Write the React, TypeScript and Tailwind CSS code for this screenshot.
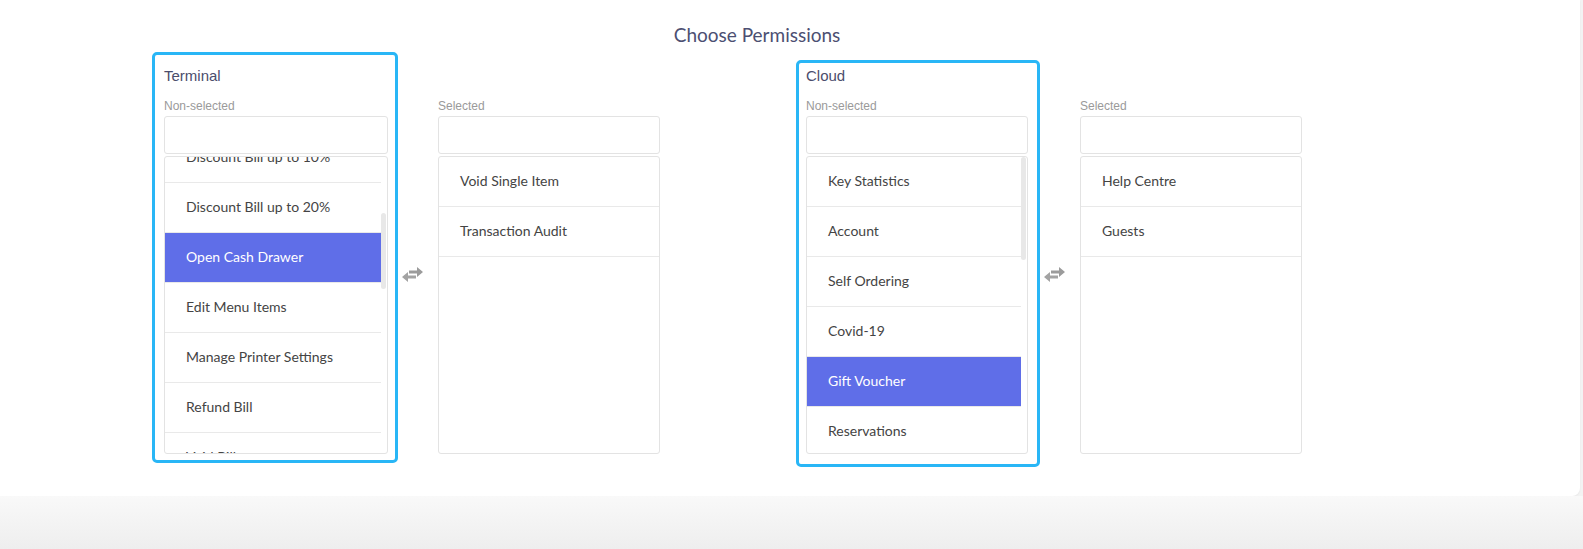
import React from "react";

type Row = { label: string; active?: boolean };

const terminalOptions: Row[] = [
  { label: "Discount Bill up to 10%" },
  { label: "Discount Bill up to 20%" },
  { label: "Open Cash Drawer", active: true },
  { label: "Edit Menu Items" },
  { label: "Manage Printer Settings" },
  { label: "Refund Bill" },
  { label: "Void Bill" },
];

const cloudOptions: Row[] = [
  { label: "Key Statistics" },
  { label: "Account" },
  { label: "Self Ordering" },
  { label: "Covid-19" },
  { label: "Gift Voucher", active: true },
  { label: "Reservations" },
];

function ListRow({ row }: { row: Row }) {
  return (
    <div
      className={
        row.active
          ? "h-[50px] shrink-0 flex items-center pl-[21px] pb-[3px] border-b border-[#e9e9e9] bg-[#5f6ee8] text-white font-['Lato',sans-serif] text-[14px]"
          : "h-[50px] shrink-0 flex items-center pl-[21px] pb-[3px] border-b border-[#e9e9e9] text-[#444444] font-['Lato',sans-serif] text-[14px]"
      }
    >
      {row.label}
    </div>
  );
}

function FilterBox() {
  return <div className="mt-[3px] h-[38px] rounded-[3px] border border-[#e3e3e3] bg-white" />;
}

function SwapIcon() {
  return (
    <svg width="21" height="15" viewBox="0 0 21 15" className="mt-[215px] ml-[4px] mr-[15px] shrink-0">
      <path d="M7 3.5H15V0L21 5L15 10V6.5H7Z" fill="#9b9b9b" />
      <path d="M14 8.5H6V5L0 10L6 15V11.5H14Z" fill="#a3a3a3" />
    </svg>
  );
}

function NonSelected({
  title,
  rows,
  width,
  offset,
  thumbTop,
  thumbHeight,
}: {
  title: string;
  rows: Row[];
  width: string;
  offset: string;
  thumbTop: string;
  thumbHeight: string;
}) {
  return (
    <div className={width}>
      <div className="h-[18px] leading-[18px] text-[15px] text-[#4b4d6c] mb-[14px]">{title}</div>
      <div className="h-[14px] leading-[14px] text-[12px] text-[#9a9a9a]">Non-selected</div>
      <FilterBox />
      <div className="mt-[2px] h-[298px] rounded-[3px] border border-[#e3e3e3] bg-white overflow-hidden flex">
        <div className="flex-1 overflow-hidden">
          <div className={offset + " flex flex-col"}>
            {rows.map((r) => (
              <ListRow key={r.label} row={r} />
            ))}
          </div>
        </div>
        <div className="w-[6px] shrink-0 pr-[1px]">
          <div className={thumbTop + " " + thumbHeight + " w-[5px] rounded-full bg-[#e8e8e8]"} />
        </div>
      </div>
    </div>
  );
}

function Selected({ rows }: { rows: Row[] }) {
  return (
    <div className="w-[222px] mt-[47px] shrink-0">
      <div className="h-[14px] leading-[14px] text-[12px] text-[#9a9a9a]">Selected</div>
      <FilterBox />
      <div className="mt-[2px] h-[298px] rounded-[3px] border border-[#e3e3e3] bg-white overflow-hidden flex flex-col">
        {rows.map((r) => (
          <ListRow key={r.label} row={r} />
        ))}
      </div>
    </div>
  );
}

export default function App() {
  return (
    <div
      className="h-[549px] w-full bg-[#f3f3f3] overflow-hidden"
      style={{ fontFamily: "'Liberation Sans', Arial, sans-serif" }}
    >
      <div className="w-[1580px] h-[496px] bg-white rounded-br-[8px] shadow-[0_1px_2px_rgba(0,0,0,0.05)] pt-[23px]">
        <div className="w-[1514px] text-center h-[24px] leading-[24px] text-[19px] text-[#4c4f72] font-['Lato',sans-serif]">
          Choose Permissions
        </div>

        <div className="mt-[5px] pl-[152px] flex items-start">
          {/* Terminal */}
          <div className="flex items-start">
            <div className="border-[3px] border-[#29b6f6] rounded-[5px] pt-[12px] pl-[9px] pr-[7px] pb-[6px]">
              <NonSelected
                title="Terminal"
                rows={terminalOptions}
                width="w-[224px]"
                offset="-mt-[24px]"
                thumbTop="mt-[56px]"
                thumbHeight="h-[76px]"
              />
            </div>
            <SwapIcon />
            <Selected rows={[{ label: "Void Single Item" }, { label: "Transaction Audit" }]} />
          </div>

          {/* Cloud */}
          <div className="flex items-start ml-[136px]">
            <div className="mt-[8px] border-[3px] border-[#29b6f6] rounded-[5px] pt-[4px] pl-[7px] pr-[9px] pb-[10px]">
              <NonSelected
                title="Cloud"
                rows={cloudOptions}
                width="w-[222px]"
                offset="mt-0"
                thumbTop="mt-0"
                thumbHeight="h-[103px]"
              />
            </div>
            <SwapIcon />
            <Selected rows={[{ label: "Help Centre" }, { label: "Guests" }]} />
          </div>
        </div>
      </div>
      <div className="h-[53px] w-full bg-gradient-to-b from-[#f9f9f9] to-[#eeeeee]" />
    </div>
  );
}
